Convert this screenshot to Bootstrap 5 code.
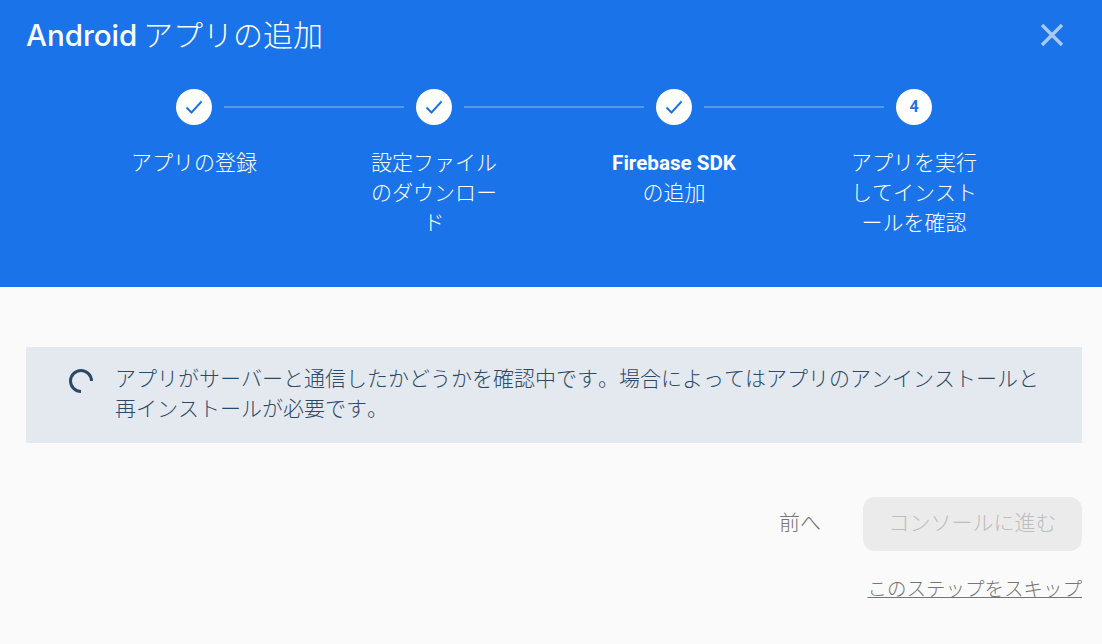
<!DOCTYPE html>
<html lang="ja">
<head>
<meta charset="utf-8">
<title>Android アプリの追加</title>
<link href="https://cdn.jsdelivr.net/npm/bootstrap@5.3.0/dist/css/bootstrap.min.css" rel="stylesheet">
<style>
html,body{height:100%;}
body{background:#fafafa;font-family:Roboto,"Noto Sans CJK JP",sans-serif;color:#2c4a68;overflow:hidden;font-weight:300;font-kerning:none;}
.hero{background:#1a73e8;height:287px;color:#fff;padding:0 20px 0 26px;}
.hero-top{height:70px;}
.hero-title{font-family:Inter,"Noto Sans CJK JP",sans-serif;font-size:29.5px;font-weight:500;line-height:36px;margin:0 0 3px;font-kerning:normal;}
.hero-title span{font-family:"Noto Sans CJK JP",sans-serif;font-weight:300;font-size:30px;margin-left:-2px;font-kerning:none;}
.close-x{background:none;border:0;padding:0;width:24px;height:24px;margin-right:18px;line-height:0;}
.track{margin-top:19px;height:36px;}
.dot{width:36px;height:36px;border-radius:50%;background:#fff;color:#1a73e8;font-size:16px;font-weight:700;flex:none;}
.link-bar{width:180px;height:2px;background:#5a97ee;margin:0 12px;flex:none;}
.labels{margin-top:23px;}
.label-cell{width:240px;}
.label-text{width:130px;font-size:21px;line-height:30px;text-align:center;word-break:break-all;line-break:anywhere;}
.label-text b{font-weight:700;font-size:20.6px;font-kerning:normal;}
.page-body{padding:60px 20px 0 26px;}
.notice{background:#e4e9f0;height:96px;padding:17px 20px 0 42px;font-size:21px;line-height:30px;}
.spin{width:28px;height:28px;flex:none;margin-top:3px;margin-right:20px;margin-left:-1px;}
.notice p{margin:0;color:#2c4a68;width:930px;}
.actions{margin-top:54px;}
.prev-btn{background:none;border:0;color:#757575;font-size:21px;font-weight:300;padding:0;margin-right:42px;}
.next-btn{background:#ebebeb;border:0;border-radius:12px;color:#bdbdbd;font-size:21px;font-weight:300;width:219px;height:54px;padding:0;}
.skip{display:block;text-align:right;margin-top:24px;font-size:19.5px;line-height:30px;color:#757575;text-decoration:underline;}
</style>
</head>
<body>
<header class="hero">
  <div class="hero-top d-flex justify-content-between align-items-center">
    <h1 class="hero-title">Android <span>アプリの追加</span></h1>
    <button class="close-x" type="button" aria-label="閉じる">
      <svg width="24" height="24" viewBox="0 0 24 24"><path d="M2 2 22 22M22 2 2 22" stroke="#a9c9f5" stroke-width="3.4" fill="none"/></svg>
    </button>
  </div>
  <div class="track d-flex justify-content-center align-items-center">
    <div class="dot d-flex align-items-center justify-content-center"><svg width="20" height="20" viewBox="0 0 20 20"><path d="M2.500 10.500 7.500 15.500 17.500 4.500" stroke="#1a73e8" stroke-width="1.9" fill="none"/></svg></div>
    <div class="link-bar"></div>
    <div class="dot d-flex align-items-center justify-content-center"><svg width="20" height="20" viewBox="0 0 20 20"><path d="M2.500 10.500 7.500 15.500 17.500 4.500" stroke="#1a73e8" stroke-width="1.9" fill="none"/></svg></div>
    <div class="link-bar"></div>
    <div class="dot d-flex align-items-center justify-content-center"><svg width="20" height="20" viewBox="0 0 20 20"><path d="M2.500 10.500 7.500 15.500 17.500 4.500" stroke="#1a73e8" stroke-width="1.9" fill="none"/></svg></div>
    <div class="link-bar"></div>
    <div class="dot d-flex align-items-center justify-content-center">4</div>
  </div>
  <div class="labels d-flex justify-content-center">
    <div class="label-cell d-flex justify-content-center"><div class="label-text">アプリの登録</div></div>
    <div class="label-cell d-flex justify-content-center"><div class="label-text">設定ファイルのダウンロード</div></div>
    <div class="label-cell d-flex justify-content-center"><div class="label-text"><b>Firebase SDK</b> の追加</div></div>
    <div class="label-cell d-flex justify-content-center"><div class="label-text">アプリを実行してインストールを確認</div></div>
  </div>
</header>
<main class="page-body">
  <div class="notice d-flex align-items-start">
    <svg class="spin" viewBox="0 0 28 28"><path d="M14 24.500A10.500 10.500 0 1 1 24.500 14" stroke="#2c4a68" stroke-width="3" fill="none"/></svg>
    <p>アプリがサーバーと通信したかどうかを確認中です。場合によってはアプリのアンインストールと再インストールが必要です。</p>
  </div>
  <div class="actions d-flex justify-content-end align-items-center">
    <button class="prev-btn" type="button">前へ</button>
    <button class="next-btn" type="button" disabled>コンソールに進む</button>
  </div>
  <a class="skip" href="#">このステップをスキップ</a>
</main>
<script src="https://cdn.jsdelivr.net/npm/bootstrap@5.3.0/dist/js/bootstrap.bundle.min.js"></script>
</body>
</html>
